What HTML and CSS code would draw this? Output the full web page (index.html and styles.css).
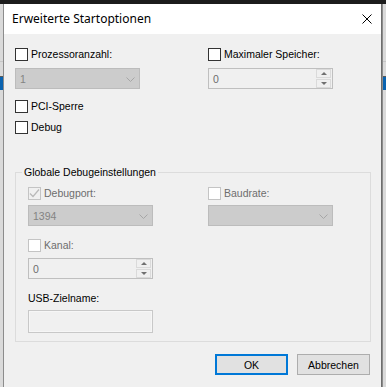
FILE: index.html
```html
<!DOCTYPE html>
<html lang="de">
<head>
    <meta charset="UTF-8">
    <meta name="viewport" content="width=device-width, initial-scale=1.0">
    <title>Erweiterte Startoptionen</title>
    <link rel="stylesheet" href="styles.css">
</head>
<body>
    <!-- window behind the dialog -->
    <div class="backdrop">
        <div class="bd-top"></div>
        <div class="bd-line"></div>
        <div class="bd-sel"></div>
    </div>

    <div class="dialog">
        <div class="titlebar">
            <span class="title">Erweiterte Startoptionen</span>
            <svg class="close" width="10" height="10" viewBox="0 0 10 10">
                <path d="M0.5 0.5 L9.5 9.5 M9.5 0.5 L0.5 9.5" stroke="#000" stroke-width="1" fill="none"/>
            </svg>
        </div>

        <div class="content">
            <div class="cols top-cols">
                <div class="field">
                    <label class="check"><span class="box"></span>Prozessoranzahl:</label>
                    <div class="combo"><span>1</span>
                        <svg class="chev" width="9" height="5" viewBox="0 0 9 5"><path d="M0.5 0.5 L4.5 4.5 L8.5 0.5" stroke="#a6a6a6" fill="none"/></svg>
                    </div>
                </div>
                <div class="field">
                    <label class="check"><span class="box"></span>Maximaler Speicher:</label>
                    <div class="spin"><span>0</span>
                        <div class="spin-btns">
                            <span class="sb up"></span>
                            <span class="sb down"></span>
                        </div>
                    </div>
                </div>
            </div>

            <label class="check pci"><span class="box"></span>PCI-Sperre</label>
            <label class="check debug"><span class="box"></span>Debug</label>

            <fieldset class="group">
                <legend>Globale Debugeinstellungen</legend>
                <div class="cols group-cols">
                    <div class="field">
                        <label class="check off"><span class="box checked">
                            <svg width="11" height="11" viewBox="0 0 11 11"><path d="M1 5.5 L4 8.5 L10 1.5" stroke="#b9b9b9" stroke-width="1.2" fill="none"/></svg>
                        </span>Debugport:</label>
                        <div class="combo"><span>1394</span>
                            <svg class="chev" width="9" height="5" viewBox="0 0 9 5"><path d="M0.5 0.5 L4.5 4.5 L8.5 0.5" stroke="#a6a6a6" fill="none"/></svg>
                        </div>
                    </div>
                    <div class="field">
                        <label class="check off"><span class="box"></span>Baudrate:</label>
                        <div class="combo"><span></span>
                            <svg class="chev" width="9" height="5" viewBox="0 0 9 5"><path d="M0.5 0.5 L4.5 4.5 L8.5 0.5" stroke="#a6a6a6" fill="none"/></svg>
                        </div>
                    </div>
                </div>

                <div class="field kanal">
                    <label class="check off"><span class="box"></span>Kanal:</label>
                    <div class="spin"><span>0</span>
                        <div class="spin-btns">
                            <span class="sb up"></span>
                            <span class="sb down"></span>
                        </div>
                    </div>
                </div>

                <div class="field usb">
                    <div class="label">USB-Zielname:</div>
                    <div class="textbox"></div>
                </div>
            </fieldset>

            <div class="buttons">
                <button class="btn default">OK</button>
                <button class="btn">Abbrechen</button>
            </div>
        </div>
    </div>
</body>
</html>
```
FILE: styles.css
```css
body {
    margin: 0;
    width: 386px;
    height: 387px;
    overflow: hidden;
    font-family: "Liberation Sans", Arial, sans-serif;
    font-size: 10.5px;
    color: #000;
    background-color: #dadada;
    position: relative;
}

/* background window */
.backdrop {
    height: 387px;
}
.bd-top {
    height: 4px;
    background-color: #1c1c1c;
}
.bd-line {
    height: 1px;
    margin-top: 57px;
    background-color: #c6c6c6;
}
.bd-sel {
    height: 13px;
    margin-top: 14px;
    border-top: 1px solid #5a5a5a;
    background-color: #0a63b0;
}

/* dialog window */
.dialog {
    position: absolute;
    left: 3px;
    top: 4px;
    width: 377px;
    height: 383px;
    background-color: #f0f0f0;
    border-left: 1px solid #8c8c8c;
    border-right: 1px solid #6e6e6e;
    box-shadow: 1px 0 0 #8c8c8c;
}
.titlebar {
    height: 30px;
    background-color: #fff;
    display: flex;
    align-items: center;
    padding: 0 9px 0 8px;
}
.title {
    flex: 1;
    font-family: "Noto Sans", "Open Sans", sans-serif;
    font-size: 12px;
    line-height: 16px;
}
.close {
    display: block;
}

.content {
    padding: 13px 10px 0 11px;
}

.cols {
    display: grid;
}
.top-cols {
    grid-template-columns: 193px 1fr;
}
.group-cols {
    grid-template-columns: 180px 1fr;
}

.check {
    display: flex;
    align-items: center;
    gap: 3px;
    height: 15px;
    line-height: 15px;
}
.check.off {
    color: #6d6d6d;
}
.box {
    box-sizing: border-box;
    width: 13px;
    height: 13px;
    border: 1px solid #333;
    background-color: #fff;
    display: flex;
    align-items: center;
    justify-content: center;
}
.off .box {
    border-color: #c4c4c4;
}
.off .box.checked {
    background-color: #f0f0f0;
}
.off .box svg {
    display: block;
}

.combo {
    box-sizing: border-box;
    width: 125px;
    height: 21px;
    margin-top: 6px;
    border: 1px solid #bcbcbc;
    background-color: #cccccc;
    color: #838383;
    display: flex;
    align-items: center;
    justify-content: space-between;
    padding: 0 4px 0 4px;
}
.chev {
    display: block;
    margin-top: 1px;
}

.spin {
    box-sizing: border-box;
    width: 125px;
    height: 21px;
    margin-top: 6px;
    border: 1px solid #bfbfbf;
    background-color: #f0f0f0;
    color: #6d6d6d;
    display: flex;
    align-items: center;
    justify-content: space-between;
    padding: 0 1px 0 4px;
}
.spin-btns {
    display: flex;
    flex-direction: column;
    gap: 1px;
    width: 15px;
}
.sb {
    box-sizing: border-box;
    height: 9px;
    border: 1px solid #dadada;
    background-color: #f0f0f0;
    display: flex;
    align-items: center;
    justify-content: center;
}
.sb.up::after {
    content: "";
    border-left: 3px solid transparent;
    border-right: 3px solid transparent;
    border-bottom: 3px solid #707070;
}
.sb.down::after {
    content: "";
    border-left: 3px solid transparent;
    border-right: 3px solid transparent;
    border-top: 3px solid #707070;
}

.pci {
    margin-top: 10px;
}
.debug {
    margin-top: 6px;
}

.group {
    margin: 30px 0 0 0;
    padding: 6px 10px 8px 12px;
    border: 1px solid #dcdcdc;
    min-width: 0;
}
.group legend {
    padding: 0 2px;
    margin-left: -6px;
    line-height: 15px;
}
.group .combo {
    margin-top: 4px;
}
.kanal {
    margin-top: 12px;
}
.kanal .spin {
    margin-top: 5px;
}
.usb {
    margin-top: 12px;
}
.usb .label {
    line-height: 15px;
}
.textbox {
    box-sizing: border-box;
    width: 125px;
    height: 23px;
    margin-top: 4px;
    border: 1px solid #c8c8c8;
    background-color: #f0f0f0;
    box-shadow: inset 0 0 0 1px #f6f6f6;
}

.buttons {
    display: flex;
    justify-content: flex-end;
    gap: 9px;
    margin-top: 12px;
    padding-right: 1px;
}
.btn {
    box-sizing: border-box;
    width: 73px;
    height: 21px;
    font-family: inherit;
    font-size: 10.5px;
    color: #000;
    background-color: #e1e1e1;
    border: 1px solid #adadad;
    padding: 0;
}
.btn.default {
    border: 2px solid #0078d7;
}
```
